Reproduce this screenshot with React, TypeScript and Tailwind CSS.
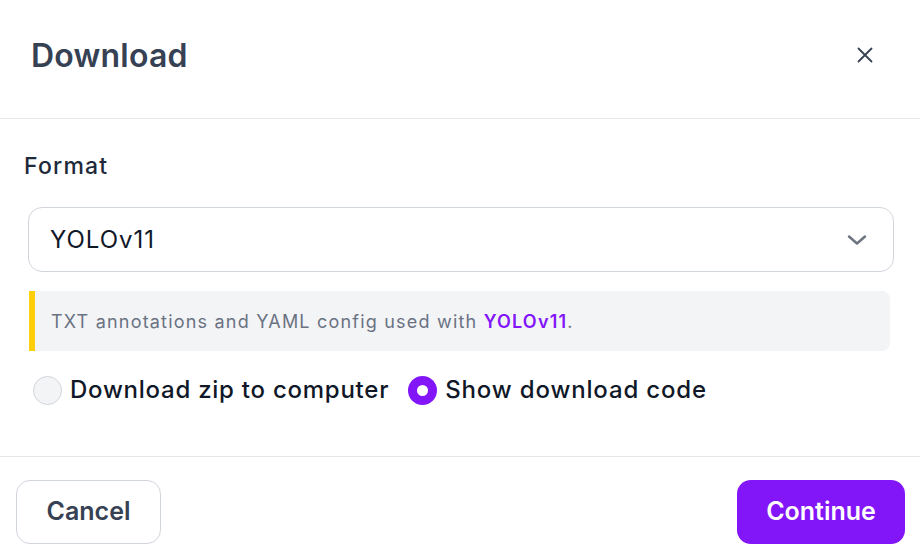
import React from "react";

export default function App() {
  return (
    <div className="w-[920px] h-[558px] bg-white flex flex-col font-['Inter',sans-serif] overflow-hidden">
      {/* Header */}
      <div className="h-[119px] shrink-0 flex items-center justify-between pl-[32px] pr-[47px] pb-[6px] border-b border-gray-200">
        <h1 className="text-[32px] leading-[40px] font-semibold text-gray-700 tracking-[0.2px] -ml-[1px]">Download</h1>
        <button className="w-[16px] h-[16px] flex items-center justify-center mb-[2px]">
          <svg width="16" height="16" viewBox="0 0 16 16" fill="none">
            <path d="M1.5 1.5 L14.5 14.5 M14.5 1.5 L1.5 14.5" stroke="#374151" strokeWidth="1.8" strokeLinecap="round" />
          </svg>
        </button>
      </div>

      {/* Body */}
      <div className="h-[337px] shrink-0 flex flex-col px-[24px] pt-[33px]">
        <label className="text-[23px] leading-[28px] font-medium text-gray-800 tracking-[1.2px]">Format</label>
        <div className="mt-[27px] ml-[4px] w-[866px] h-[65px] rounded-[14px] border border-gray-300 bg-white flex items-center justify-between pl-[21px] pr-[26px]">
          <span className="text-[24px] text-gray-900 tracking-[1px]">YOLOv11</span>
          <svg width="20" height="10" viewBox="0 0 20 10" fill="none">
            <path d="M2 1.5 L10 8.5 L18 1.5" stroke="#6b7280" strokeWidth="2.4" strokeLinecap="round" strokeLinejoin="round" />
          </svg>
        </div>
        <div className="mt-[19px] ml-[5px] w-[861px] h-[60px] rounded-r-[8px] bg-gray-100 border-l-[6px] border-[#fccf0a] flex items-center pl-[16px]">
          <span className="text-[18px] text-gray-500 tracking-[1.2px]">
            TXT annotations and YAML config used with <span className="text-[#8315f9] font-semibold">YOLOv11</span>.
          </span>
        </div>
        <div className="mt-[24px] ml-[9px] flex items-center h-[30px]">
          <label className="flex items-center">
            <span className="w-[29px] h-[29px] rounded-full bg-gray-100 border border-gray-300" />
            <span className="ml-[8px] text-[24px] font-medium text-gray-900 tracking-[0.75px]">Download zip to computer</span>
          </label>
          <label className="flex items-center ml-[19px]">
            <span className="w-[29px] h-[29px] rounded-full bg-[#8315f9] flex items-center justify-center">
              <span className="w-[11px] h-[11px] rounded-full bg-white" />
            </span>
            <span className="ml-[8px] text-[24px] font-medium text-gray-900 tracking-[0.85px]">Show download code</span>
          </label>
        </div>
      </div>

      {/* Footer */}
      <div className="flex-1 border-t border-gray-200 flex items-start justify-between pl-[16px] pr-[15px] pt-[23px]">
        <button className="w-[145px] h-[64px] rounded-[14px] border border-gray-300 bg-white text-[25px] font-semibold text-gray-700">
          Cancel
        </button>
        <button className="w-[168px] h-[64px] rounded-[14px] bg-[#8315f9] text-[25px] font-semibold text-white">
          Continue
        </button>
      </div>
    </div>
  );
}
